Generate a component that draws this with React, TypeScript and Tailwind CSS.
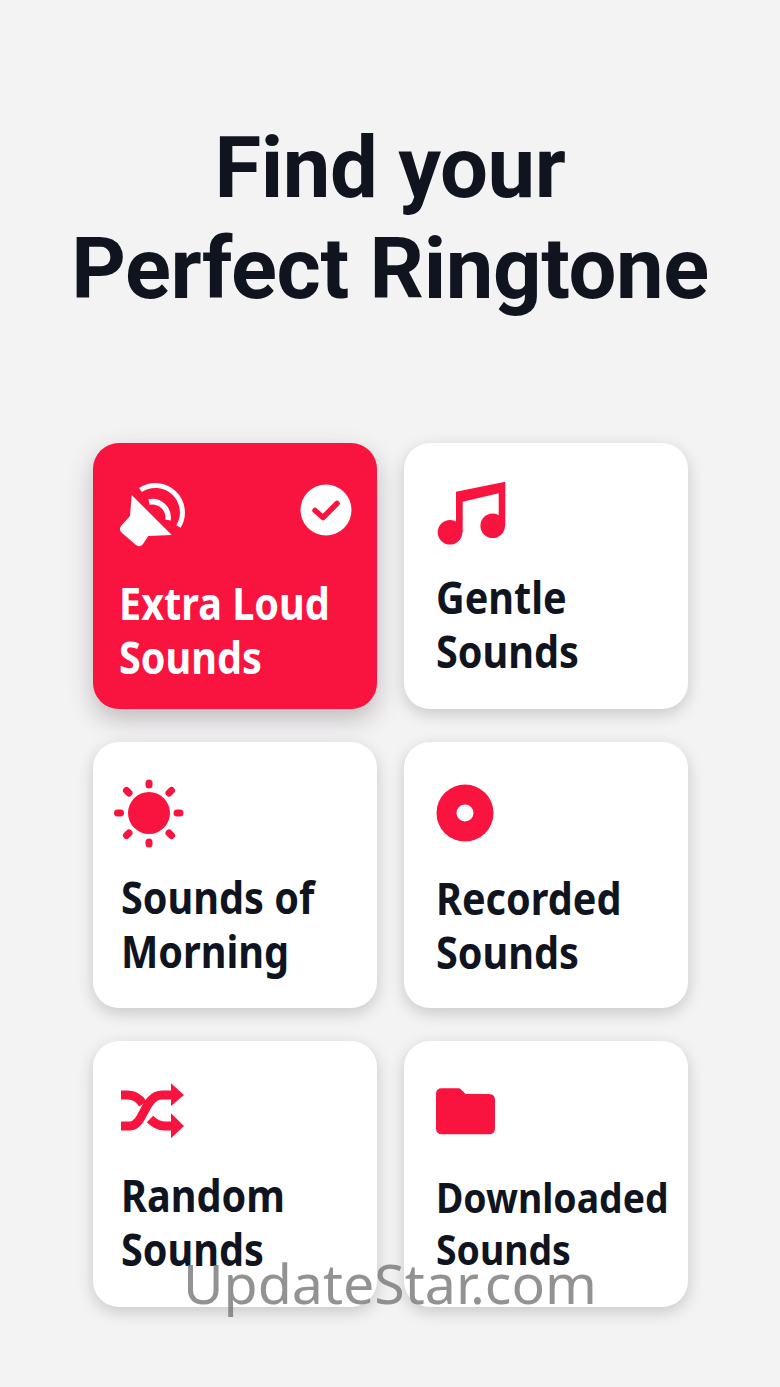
import type { ReactNode } from 'react';

const RED = '#f8143f';

function LoudIcon() {
  return (
    <svg viewBox="0 0 70 70" className="h-[70px] w-[70px]" fill="#fff">
      {/* speaker body */}
      <path d="M13.7 15 L53.7 55 L30.3 56 L25 64 Q22 68 18 65 L4 53 Q0.5 50 3 46 L12 36 Z" />
      {/* sound waves */}
      <path d="M22.5 10 A27 27 0 0 1 60.5 46.5" fill="none" stroke="#fff" strokeWidth="5" />
      <path d="M31 22 A16 16 0 0 1 50 40" fill="none" stroke="#fff" strokeWidth="5.5" />
    </svg>
  );
}

function CheckBadge() {
  return (
    <svg viewBox="0 0 52 52" className="h-[52px] w-[52px]">
      <circle cx="26" cy="26" r="25.5" fill="#fff" />
      <path d="M15 26.5 L23 33.5 L37 19.5" fill="none" stroke={RED} strokeWidth="5.5" strokeLinecap="round" strokeLinejoin="round" />
    </svg>
  );
}

function NoteIcon() {
  return (
    <svg viewBox="0 0 70 66" className="h-[66px] w-[70px]" fill={RED}>
      <circle cx="13" cy="52.3" r="12.3" />
      <circle cx="55.7" cy="45.7" r="12.3" />
      <path d="M19 11.7 L68.3 1.7 L68.3 45.7 L61.7 45.7 L61.7 13.3 L25.7 21.7 L25.7 52.3 L19 52.3 Z" />
    </svg>
  );
}

function SunIcon() {
  return (
    <svg viewBox="0 0 70 70" className="h-[70px] w-[70px]" fill={RED}>
      <circle cx="35" cy="35" r="21" />
      <g stroke={RED} strokeWidth="7" strokeLinecap="round">
        <path d="M35 5 V7" />
        <path d="M35 64 V66" />
        <path d="M3.5 35 H6.5" />
        <path d="M63 35 H66" />
        <path d="M12.5 12.5 L15 15" />
        <path d="M55 55 L57.5 57.5" />
        <path d="M55 15 L57.5 12.5" />
        <path d="M12.5 57.5 L15 55" />
      </g>
    </svg>
  );
}

function DiscIcon() {
  return (
    <svg viewBox="0 0 58 58" className="h-[58px] w-[58px]">
      <circle cx="29" cy="29" r="28.5" fill={RED} />
      <circle cx="29" cy="29" r="8.5" fill="#fff" />
    </svg>
  );
}

function ShuffleIcon() {
  return (
    <svg viewBox="0 0 66 58" className="h-[58px] w-[66px]" fill={RED}>
      <g fill="none" stroke={RED} strokeWidth="9">
        <path d="M1 44 H10 C24 44 24 13 42 13 H52" />
        <path d="M1 13 H8 C14 13 19 16 23 22" />
        <path d="M30 37 C34 41 38 44 44 44 H52" />
      </g>
      <path d="M51 1.3 L64 13 L51 24 Z" />
      <path d="M51 31.3 L64 44 L51 56.3 Z" />
    </svg>
  );
}

function FolderIcon() {
  return (
    <svg viewBox="0 0 60 48" className="h-[48px] w-[60px]" fill={RED}>
      <path d="M6 0.3 H22.5 Q24 0.3 25 1.5 L29.7 6 H53 Q59 6 59 12 V40 Q59 46.3 53 46.3 H6 Q0 46.3 0 40 V6 Q0 0.3 6 0.3 Z" />
    </svg>
  );
}

function Card({
  lines,
  icon,
  active,
  iconClass,
  textClass,
  badge,
}: {
  lines: string[];
  icon: ReactNode;
  active?: boolean;
  iconClass: string;
  textClass: string;
  badge?: ReactNode;
}) {
  return (
    <div
      className={`relative flex h-[266px] flex-col rounded-[26px] ${
        active
          ? 'bg-[#f8143f] text-white shadow-[0_10px_24px_rgba(60,40,45,0.28)]'
          : 'bg-white text-[#10141f] shadow-[0_5px_16px_rgba(0,0,0,0.18)]'
      }`}
    >
      <div className={iconClass}>{icon}</div>
      {badge && <div className="absolute right-[25px] top-[41px]">{badge}</div>}
      <div className={`origin-left scale-x-[0.9] font-['Noto_Sans',sans-serif] text-[44px] font-bold leading-[54px] ${textClass}`}>
        {lines.map((l) => (
          <div key={l}>{l}</div>
        ))}
      </div>
    </div>
  );
}

export default function App() {
  return (
    <div className="relative h-[1387px] w-[780px] overflow-hidden bg-[#f3f3f4]">
      <h1 className="pt-[118px] text-center font-['Roboto',sans-serif] text-[85px] font-bold leading-[101px] tracking-[-0.4px] text-[#10141f]">
        Find your
        <br />
        Perfect Ringtone
      </h1>

      <div className="mt-[123px] grid grid-cols-[284px_284px] gap-x-[27px] gap-y-[33px] pl-[93px]">
        <Card
          active
          lines={['Extra Loud', 'Sounds']}
          icon={<LoudIcon />}
          iconClass="pl-[25px] pt-[37px]"
          textClass="mt-[26px] ml-[26px]"
          badge={<CheckBadge />}
        />
        <Card
          lines={['Gentle', 'Sounds']}
          icon={<NoteIcon />}
          iconClass="pl-[33px] pt-[37px]"
          textClass="mt-[24px] ml-[32px]"
        />
        <Card
          lines={['Sounds of', 'Morning']}
          icon={<SunIcon />}
          iconClass="pl-[21px] pt-[36px]"
          textClass="mt-[22px] ml-[28px]"
        />
        <Card
          lines={['Recorded', 'Sounds']}
          icon={<DiscIcon />}
          iconClass="pl-[32px] pt-[42px]"
          textClass="mt-[29px] ml-[32px]"
        />
        <Card
          lines={['Random', 'Sounds']}
          icon={<ShuffleIcon />}
          iconClass="pl-[27px] pt-[41px]"
          textClass="mt-[28px] ml-[28px]"
        />
        <Card
          lines={['Downloaded', 'Sounds']}
          icon={<FolderIcon />}
          iconClass="pl-[32px] pt-[47px]"
          textClass="mt-[35px] ml-[32px] !text-[41.5px] !leading-[52px]"
        />
      </div>

      {/* watermark */}
      <div className="absolute left-0 top-[1248px] w-full text-center font-['Noto_Sans',sans-serif] text-[55.5px] font-normal leading-[70px] text-[#777777]/80">
        UpdateStar.com
      </div>
    </div>
  );
}
